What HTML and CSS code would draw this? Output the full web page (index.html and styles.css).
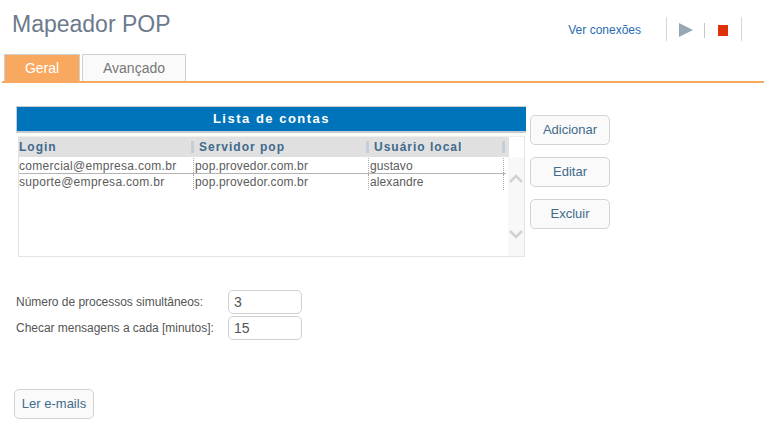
FILE: index.html
```html
<!DOCTYPE html>
<html lang="pt">
<head>
<meta charset="utf-8">
<title>Mapeador POP</title>
<link rel="stylesheet" href="styles.css">
</head>
<body>
<header class="top">
  <h1 class="title">Mapeador POP</h1>
  <div class="actions">
    <a class="link">Ver conexões</a>
    <div class="tools">
      <span class="tool tool-tall"><svg width="14" height="14" viewBox="0 0 14 14"><path d="M0 0L14 7L0 14Z" fill="#95a8b3"/></svg></span>
      <span class="tool tool-stop"><span class="stop"></span></span>
    </div>
  </div>
</header>
<nav class="tabs">
  <span class="tab tab-on">Geral</span>
  <span class="tab">Avançado</span>
</nav>
<main class="main">
  <section class="accounts">
    <div class="list">
      <div class="list-title">Lista de contas</div>
      <div class="box">
        <div class="grid-wrap">
          <div class="row head">
            <span class="c c1">Login</span><span class="c c2">Servidor pop</span><span class="c c3">Usuário local</span>
          </div>
          <div class="row item first">
            <span class="c c1">comercial@empresa.com.br</span><span class="c c2">pop.provedor.com.br</span><span class="c c3">gustavo</span>
          </div>
          <div class="row item">
            <span class="c c1">suporte@empresa.com.br</span><span class="c c2">pop.provedor.com.br</span><span class="c c3">alexandre</span>
          </div>
        </div>
        <div class="scroll">
          <svg width="14" height="9" viewBox="0 0 14 9"><path d="M1 8L7 2L13 8" fill="none" stroke="#cfd3d3" stroke-width="2.6"/></svg>
          <svg width="14" height="9" viewBox="0 0 14 9"><path d="M1 1L7 7L13 1" fill="none" stroke="#cfd3d3" stroke-width="2.6"/></svg>
        </div>
      </div>
    </div>
    <div class="side">
      <button class="btn">Adicionar</button>
      <button class="btn">Editar</button>
      <button class="btn">Excluir</button>
    </div>
  </section>
  <section class="form">
    <div class="field"><label class="lbl">Número de processos simultâneos:</label><input class="inp" value="3"></div>
    <div class="field"><label class="lbl">Checar mensagens a cada [minutos]:</label><input class="inp" value="15"></div>
  </section>
  <button class="btn read">Ler e-mails</button>
</main>
</body>
</html>
```
FILE: styles.css
```css
* { box-sizing: border-box; }
html, body { margin: 0; padding: 0; }
body {
  width: 764px;
  height: 443px;
  overflow: hidden;
  background: #fff;
  font-family: "Liberation Sans", Arial, sans-serif;
  font-size: 12px;
  color: #555;
}
.top {
  height: 54px;
  display: flex;
  justify-content: space-between;
  padding: 10px 22px 0 12px;
}
.title {
  margin: 0;
  font-size: 23px;
  line-height: 28px;
  font-weight: normal;
  color: #6c7a8c;
}
.actions {
  display: flex;
  align-items: flex-start;
  padding-top: 7px;
}
.link {
  color: #2a6cb3;
  font-size: 12px;
  line-height: 26px;
  margin-right: 25px;
}
.tools {
  display: flex;
  height: 24px;
  width: 76px;
  border-left: 1px solid #d4d6d8;
  border-right: 1px solid #d4d6d8;
}
.tool {
  flex: 1;
  display: flex;
  align-items: center;
  justify-content: center;
  padding-top: 2px;
}
.tool-stop { position: relative; }
.tool-stop::before {
  content: "";
  position: absolute;
  left: 0;
  top: 6px;
  width: 1px;
  height: 15px;
  background: #c4c6c8;
}
.stop {
  width: 10px;
  height: 11px;
  background: #e0300a;
}
.tabs {
  display: flex;
  gap: 2px;
  height: 29px;
  margin-left: 2px;
  padding-left: 2px;
  border-bottom: 2px solid #f9a95f;
}
.tab {
  width: 104px;
  height: 27px;
  border: 1px solid #cfcfcf;
  border-bottom: 0;
  background: #fafafa;
  color: #777;
  font-size: 14px;
  line-height: 27px;
  text-align: center;
}
.tab-on {
  width: 76px;
  background: #f9a95f;
  color: #fff;
}
.main { padding: 23px 0 0 14px; }
.accounts { display: flex; align-items: flex-start; padding-left: 2px; }
.list { width: 510px; }
.list-title {
  height: 27px;
  background: #0074bb;
  border: 1px solid #c8ccd0;
  border-right: 0;
  border-bottom-width: 2px;
  color: #fff;
  font-weight: bold;
  font-size: 13px;
  letter-spacing: 1.5px;
  line-height: 24px;
  text-align: center;
}
.box {
  display: flex;
  width: 507px;
  height: 121px;
  margin: 3px 0 0 2px;
  border: 1px solid #e4e4e4;
  border-top-color: #eee;
}
.grid-wrap { width: 489px; }
.row { display: flex; }
.c { display: block; height: 100%; white-space: nowrap; overflow: hidden; }
.c1 { width: 175px; }
.c2 { width: 175px; }
.c3 { width: 136px; }
.head {
  height: 20px;
  width: 490px;
  background: #e0e0e0;
  color: #3f6a8c;
  font-weight: bold;
  letter-spacing: 1px;
}
.head .c {
  height: 12px;
  margin-top: 4px;
  line-height: 13px;
  border-right: 3px solid #c5cdd6;
  overflow: visible;
}
.head .c2, .head .c3 { padding-left: 5px; }
.item { height: 16px; width: 487px; line-height: 16px; color: #5c5c5c; }
.item.first { height: 17px; padding-top: 1px; border-bottom: 1px solid #b4b4b4; }
.item .c { border-right: 1px dotted #aaa; padding-left: 1px; }
.item .c1 { letter-spacing: 0.3px; padding-left: 0; }
.item .c2 { letter-spacing: 0.16px; }
.item .c3 { width: 135px; letter-spacing: 0.1px; }
.scroll {
  width: 17px;
  margin-top: 20px;
  background: #f8f8f8;
  display: flex;
  flex-direction: column;
  align-items: center;
  justify-content: space-between;
  padding: 17px 0 17px;
}
.side {
  display: flex;
  flex-direction: column;
  gap: 12px;
  margin-left: 4px;
  padding-top: 9px;
}
.btn {
  width: 80px;
  height: 30px;
  padding: 0 0 2px;
  background: #fafafa;
  border: 1px solid #d4d4d4;
  border-radius: 5px;
  color: #3f6a8c;
  font-family: inherit;
  font-size: 13px;
}
.form { margin-top: 33px; padding-left: 2px; }
.field { display: flex; align-items: center; height: 24px; margin-bottom: 2px; }
.lbl { width: 212px; color: #555; letter-spacing: -0.03px; }
.inp {
  width: 74px;
  height: 24px;
  border: 1px solid #d0d0d0;
  border-radius: 5px;
  padding: 0 5px;
  font-family: inherit;
  font-size: 14px;
  color: #555;
  outline: none;
}
.read { display: block; margin-top: 49px; }
```
